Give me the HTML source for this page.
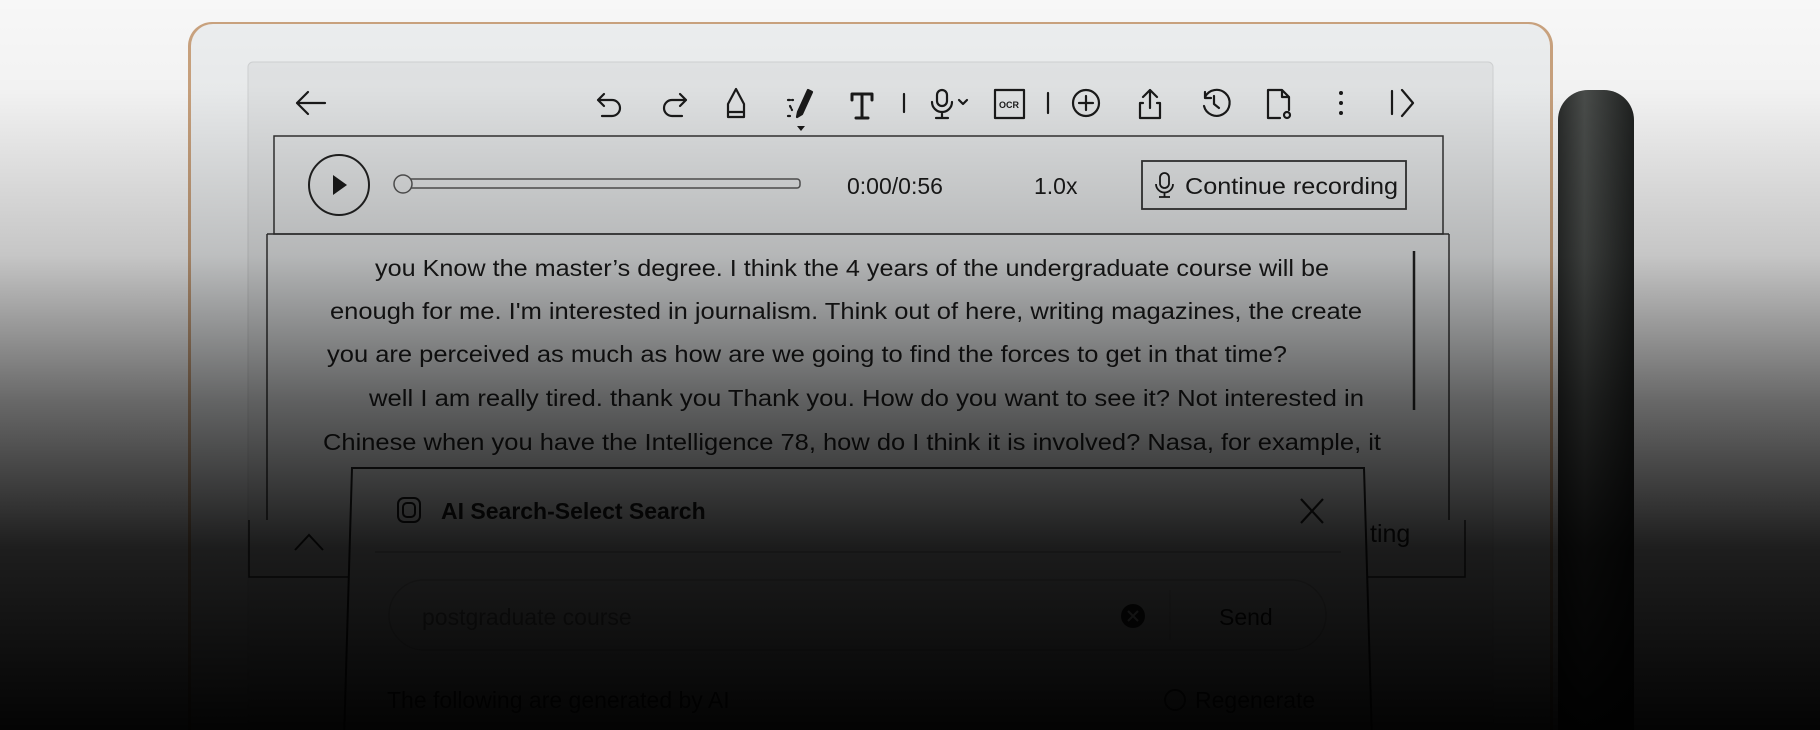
<!DOCTYPE html>
<html><head><meta charset="utf-8"><style>
html,body{margin:0;padding:0;background:#fff;width:1820px;height:730px;overflow:hidden}
svg{display:block}
text{font-family:"Liberation Sans",sans-serif;fill:#1a1a1a}
</style></head><body>
<svg width="1820" height="730" viewBox="0 0 1820 730" xmlns="http://www.w3.org/2000/svg">
<defs>
<linearGradient id="ov" x1="0" y1="0" x2="0" y2="1">
<stop offset="0" stop-color="#000" stop-opacity="0"/>
<stop offset="0.12" stop-color="#000" stop-opacity="0.02"/>
<stop offset="0.35" stop-color="#000" stop-opacity="0.2"/>
<stop offset="0.55" stop-color="#000" stop-opacity="0.58"/>
<stop offset="0.75" stop-color="#000" stop-opacity="0.88"/>
<stop offset="1" stop-color="#000" stop-opacity="0.985"/>
</linearGradient>
<linearGradient id="pen" x1="0" y1="0" x2="1" y2="0">
<stop offset="0" stop-color="#2a2c2b"/><stop offset="0.35" stop-color="#4a4d4b"/><stop offset="1" stop-color="#1f2120"/>
</linearGradient>
</defs>
<rect width="1820" height="730" fill="#f7f7f7"/>
<rect x="1558" y="90" width="76" height="700" rx="30" fill="url(#pen)"/>
<rect x="188" y="22" width="1365" height="760" rx="24" fill="#c9a27e"/>
<rect x="191" y="24" width="1359" height="760" rx="22" fill="#eceeef"/>
<rect x="248" y="62" width="1245" height="720" rx="5" fill="#e2e4e5" stroke="#d0d2d3"/>
<g fill="none" stroke="#1a1a1a" stroke-width="2.2" stroke-linecap="round" stroke-linejoin="round">
<path d="M325 103H297M308 92L297 103L308 114"/>
<path d="M604 94L598 100L604 106M598 100H612a8 8 0 0 1 0 16H602"/>
<path d="M680 94L686 100L680 106M686 100H672a8 8 0 0 0 0 16H682"/>
<path d="M736 89L728 104V117H744V104Z M729 112H743"/>
<path d="M808 90L798 112L797 117L802 114L812 92Z" fill="#1a1a1a"/>
<path d="M788 100h5M790 106l2 4M788 116h3" stroke-dasharray="2 2"/>
<path d="M852 94H872V100M862 94V118M856 118H868M852 94V100" stroke-width="3"/>
<path d="M904 94V112"/>
<rect x="937" y="90" width="10" height="16" rx="5"/>
<path d="M932 102a10 10 0 0 0 20 0M942 112V118M936 118H948"/>
<path d="M959 100l4 4l4-4"/>
<rect x="995" y="90" width="29" height="28"/>
<path d="M1048 93V113"/>
<circle cx="1086" cy="103" r="13"/>
<path d="M1086 96V110M1079 103H1093"/>
<path d="M1150 90V108M1143 97L1150 90L1157 97M1143 103H1140V118H1160V103H1157"/>
<path d="M1205 97a13 13 0 1 1 -1 9M1205 92V98H1211M1214 96V104L1219 108"/>
<path d="M1268 90H1282L1289 97V110M1268 90V118H1280M1282 90V97H1289"/>
<circle cx="1287" cy="115" r="3"/>
<path d="M1392 91V114M1402 90L1413 103L1402 116"/>
</g>
<text x="999" y="108" font-size="9" style="font-weight:bold">OCR</text>
<g fill="#1a1a1a"><circle cx="1341" cy="93" r="2"/><circle cx="1341" cy="103" r="2"/><circle cx="1341" cy="113" r="2"/></g>
<path d="M797 126h8l-4 5z" fill="#1a1a1a"/>
<rect x="274" y="136" width="1169" height="98" fill="none" stroke="#333" stroke-width="1.5"/>
<path d="M267 234H1449" stroke="#333" stroke-width="1.5"/>
<circle cx="339" cy="185" r="30" fill="none" stroke="#222" stroke-width="2"/>
<path d="M333 175L347 185L333 195Z" fill="#1a1a1a"/>
<rect x="404" y="179" width="396" height="9" rx="3" fill="none" stroke="#555" stroke-width="1.5"/>
<circle cx="403" cy="184" r="9" fill="#e2e4e5" stroke="#555" stroke-width="1.5"/>
<text x="847" y="194" font-size="23">0:00/0:56</text>
<text x="1034" y="194" font-size="23">1.0x</text>
<rect x="1142" y="161" width="264" height="48" fill="none" stroke="#333" stroke-width="1.8"/>
<g fill="none" stroke="#1a1a1a" stroke-width="1.8"><rect x="1160" y="173" width="9" height="15" rx="4.5"/><path d="M1156 184a8.5 8.5 0 0 0 17 0M1164.5 193V197M1159 197H1170"/></g>
<text x="1185" y="194" font-size="23" textLength="213" lengthAdjust="spacingAndGlyphs">Continue recording</text>
<path d="M267 234V520M249 520V577H1465V520M1449 234V520" fill="none" stroke="#333" stroke-width="1.5"/>
<path d="M1414 251V410" stroke="#222" stroke-width="2.5"/>
<g font-size="23">
<text x="375" y="276" textLength="954" lengthAdjust="spacingAndGlyphs">you Know the master’s degree. I think the 4 years of the undergraduate course will be</text>
<text x="330" y="319" textLength="1032" lengthAdjust="spacingAndGlyphs">enough for me. I'm interested in journalism. Think out of here, writing magazines, the create</text>
<text x="327" y="362" textLength="960" lengthAdjust="spacingAndGlyphs">you are perceived as much as how are we going to find the forces to get in that time?</text>
<text x="369" y="406" textLength="995" lengthAdjust="spacingAndGlyphs">well I am really tired. thank you Thank you. How do you want to see it? Not interested in</text>
<text x="323" y="450" textLength="1058" lengthAdjust="spacingAndGlyphs">Chinese when you have the Intelligence 78, how do I think it is involved? Nasa, for example, it</text>
<text x="1370" y="542" font-size="25">ting</text>
</g>
<path d="M295 550L309 535L323 550" fill="none" stroke="#222" stroke-width="2"/>
<path d="M352 468H1364L1372 740H344Z" fill="#e2e4e5" stroke="#222" stroke-width="2"/>
<g fill="none" stroke="#1a1a1a" stroke-width="2"><rect x="398" y="498" width="22" height="24" rx="6"/><rect x="403" y="503" width="12" height="14" rx="4"/></g>
<text x="441" y="519" font-size="23" style="font-weight:bold">AI Search-Select Search</text>
<path d="M1301 499L1323 523M1323 499L1301 523" stroke="#222" stroke-width="2.2"/>
<path d="M375 552H1341" stroke="#aaa" stroke-width="1.5"/>
<rect x="389" y="580" width="937" height="70" rx="35" fill="#e2e4e5" stroke="#bbb" stroke-width="1.5"/>
<text x="422" y="625" font-size="23" style="fill:#777">postgraduate course</text>
<circle cx="1133" cy="616" r="12" fill="#222"/>
<path d="M1128 611L1138 621M1138 611L1128 621" stroke="#e6e8e9" stroke-width="2"/>
<path d="M1170 590V640" stroke="#bbb"/>
<text x="1219" y="625" font-size="23">Send</text>
<text x="387" y="708" font-size="23">The following are generated by AI</text>
<circle cx="1175" cy="700" r="10" fill="none" stroke="#333" stroke-width="2"/>
<text x="1195" y="708" font-size="23">Regenerate</text>
<rect width="1820" height="730" fill="url(#ov)"/>
</svg>
</body></html>
